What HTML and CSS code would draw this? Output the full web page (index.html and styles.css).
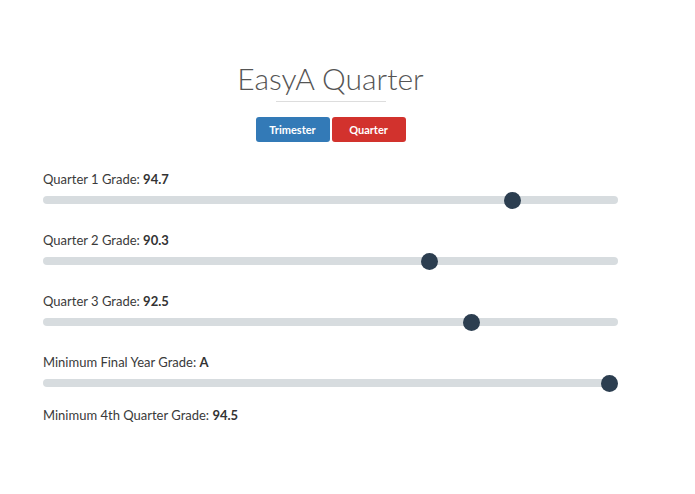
FILE: index.html
```html
<!DOCTYPE html>
<html lang="en">
<head>
    <meta charset="UTF-8">
    <meta name="viewport" content="width=device-width, initial-scale=1.0">
    <title>EasyA Quarter</title>
    <link rel="stylesheet" href="styles.css">
</head>
<body>

    <div class="calc-container">
        <h1 class="title">EasyA Quarter</h1>
        <hr class="title-rule">

        <div class="mode-buttons">
            <button type="button" class="btn btn-blue">Trimester</button>
            <button type="button" class="btn btn-red">Quarter</button>
        </div>

        <div class="grade-group">
            <label for="q1">Quarter 1 Grade: <b>94.7</b></label>
            <input type="range" id="q1" min="0" max="1000" value="827">
        </div>

        <div class="grade-group">
            <label for="q2">Quarter 2 Grade: <b>90.3</b></label>
            <input type="range" id="q2" min="0" max="1000" value="678">
        </div>

        <div class="grade-group">
            <label for="q3">Quarter 3 Grade: <b>92.5</b></label>
            <input type="range" id="q3" min="0" max="1000" value="753">
        </div>

        <div class="grade-group">
            <label for="final">Minimum Final Year Grade: <b>A</b></label>
            <input type="range" id="final" min="0" max="1000" value="1000">
        </div>

        <p class="result">Minimum 4th Quarter Grade: <b>94.5</b></p>
    </div>

</body>
</html>
```

FILE: styles.css
```css
body {
    font-family: Lato, 'Open Sans', sans-serif;
    background-color: #fff;
    color: #333;
    margin: 0;
    padding: 0;
}
.calc-container {
    width: 575px;
    padding: 0 77px 0 43px;
}
.title {
    text-align: center;
    font-size: 30px;
    font-weight: 300;
    color: #555;
    line-height: 36px;
    margin: 60px 0 0;
}
.title-rule {
    width: 110px;
    margin: 5px auto 15px;
    border: 0;
    border-top: 1px solid #ddd;
}
.mode-buttons {
    display: flex;
    justify-content: center;
    gap: 2px;
    margin-bottom: 28px;
}
.btn {
    font-family: Lato, sans-serif;
    font-size: 11px;
    font-weight: bold;
    color: #fff;
    border: none;
    border-radius: 3px;
    height: 25px;
    width: 74px;
    padding: 0;
}
.btn-blue {
    background-color: #337ab7;
}
.btn-red {
    background-color: #d2322d;
}
.grade-group {
    display: flex;
    flex-direction: column;
    height: 61px;
}
.grade-group label {
    font-size: 13px;
    line-height: 18px;
    color: #3a3a3a;
}
.grade-group b,
.result b {
    color: #333;
}
.grade-group input[type="range"] {
    -webkit-appearance: none;
    appearance: none;
    width: 575px;
    height: 8px;
    margin: 8px 0 0;
    background-color: #d7dcdf;
    border-radius: 4px;
    outline: none;
}
.grade-group input[type="range"]::-webkit-slider-thumb {
    -webkit-appearance: none;
    appearance: none;
    width: 17px;
    height: 17px;
    border-radius: 50%;
    background-color: #2c3e50;
    border: none;
}
.result {
    font-size: 13px;
    line-height: 18px;
    color: #3a3a3a;
    margin: -8px 0 0;
}
```
